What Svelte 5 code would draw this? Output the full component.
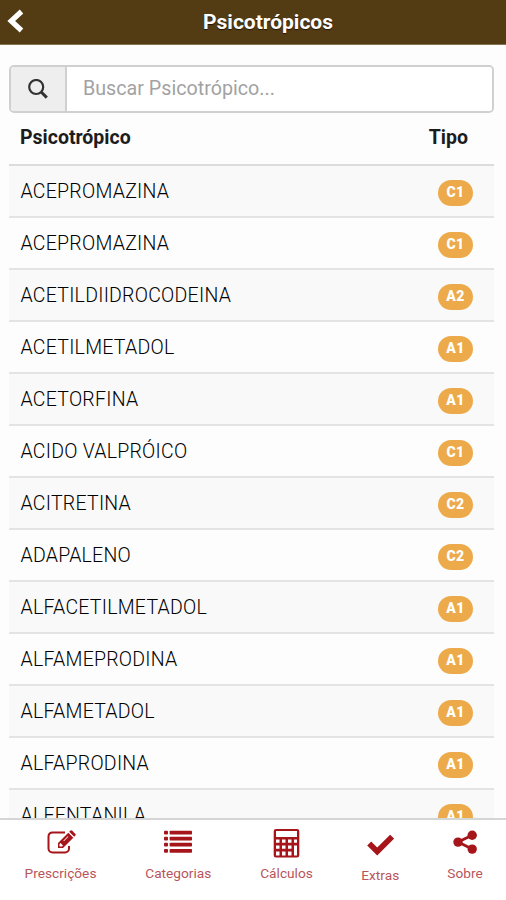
<script>
  const items = [
    { name: "ACEPROMAZINA", type: "C1" },
    { name: "ACEPROMAZINA", type: "C1" },
    { name: "ACETILDIIDROCODEINA", type: "A2" },
    { name: "ACETILMETADOL", type: "A1" },
    { name: "ACETORFINA", type: "A1" },
    { name: "ACIDO VALPRÓICO", type: "C1" },
    { name: "ACITRETINA", type: "C2" },
    { name: "ADAPALENO", type: "C2" },
    { name: "ALFACETILMETADOL", type: "A1" },
    { name: "ALFAMEPRODINA", type: "A1" },
    { name: "ALFAMETADOL", type: "A1" },
    { name: "ALFAPRODINA", type: "A1" },
    { name: "ALFENTANILA", type: "A1" },
  ];

  let search = $state("");
  let filtered = $derived(
    items.filter((i) => i.name.toLowerCase().includes(search.toLowerCase()))
  );
</script>

<div class="page">
  <header>
    <button class="back" aria-label="Voltar">
      <svg width="18" height="26" viewBox="0 0 18 26">
        <path d="M14.500 3.500 4.200 13l10.300 9.500" fill="none" stroke="#fff" stroke-width="5.200" />
      </svg>
    </button>
    <h1>Psicotrópicos</h1>
  </header>

  <main>
    <div class="search">
      <span class="addon">
        <svg width="20" height="20" viewBox="0 0 20 20" fill="none" stroke="#333">
          <circle cx="8.200" cy="8" r="7" stroke-width="2.200" />
          <path d="m13.200 13 5.600 5.600" stroke-width="3" />
        </svg>
      </span>
      <input type="text" placeholder="Buscar Psicotrópico..." bind:value={search} />
    </div>

    <div class="table">
      <div class="row head">
        <span>Psicotrópico</span>
        <span>Tipo</span>
      </div>
      {#each filtered as item}
        <div class="row item">
          <span>{item.name}</span>
          <span class="badge">{item.type}</span>
        </div>
      {/each}
    </div>
  </main>

  <nav>
    <a href="#prescricoes" class="w1">
      <svg width="30" height="26" viewBox="0 0 30 26">
        <path d="M19 3.400H6.500A4 4 0 0 0 2.500 7.400v12a4 4 0 0 0 4 4h12.500a4 4 0 0 0 4-4V17" fill="none" stroke="currentColor" stroke-width="2" />
        <path fill-rule="evenodd" d="M12 19v-5L22.300 3.700l5 5L17 19zM13.500 15v2.500H16l1-1-2.500-2.500zM17.300 11.700l.6.600 4.500-4.500-.6-.6z" />
        <path d="m23.200 2.800 1-1a1.500 1.500 0 0 1 2.100 0l2.900 2.900a1.500 1.500 0 0 1 0 2.100l-1 1z" />
      </svg>
      <span>Prescrições</span>
    </a>
    <a href="#categorias" class="w2">
      <svg width="28" height="26" viewBox="0 0 28 26">
        {#each [1.700, 7.700, 13.700, 19.900] as y}
          <rect x="0" {y} width="4" height="3.800" rx="1" />
          <rect x="5.600" {y} width="22.400" height="3.800" rx=".8" />
        {/each}
      </svg>
      <span>Categorias</span>
    </a>
    <a href="#calculos" class="w3">
      <svg width="28" height="30" viewBox="0 0 28 30">
        <path fill-rule="evenodd" d="M3 0h21a2.300 2.300 0 0 1 2.300 2.300v24a2.300 2.300 0 0 1-2.300 2.300H3a2.300 2.300 0 0 1-2.300-2.300v-24A2.300 2.300 0 0 1 3 0zM3 2v6h21V2zM3 10.500v3.300h3.500v-3.300zM9 10.500v3.300h3.500v-3.300zM15 10.500v3.300h3.500v-3.300zM21 10.500v3.300h3v-3.300zM3 16.500v3.300h3.500v-3.300zM9 16.500v3.300h3.500v-3.300zM15 16.500v3.300h3.500v-3.300zM3 22.500v4h3.500v-4zM9 22.500v4h3.500v-4zM15 22.500v4h3.500v-4zM21 16.500v10h3v-10z" />
      </svg>
      <span>Cálculos</span>
    </a>
    <a href="#extras" class="w4">
      <svg width="28" height="30" viewBox="0 0 28 30">
        <path d="m3.200 14.600 8 8L26.100 7.700" fill="none" stroke="currentColor" stroke-width="5.600" />
      </svg>
      <span>Extras</span>
    </a>
    <a href="#sobre" class="w5">
      <svg width="26" height="26" viewBox="0 0 26 26">
        <path d="M20.200 6.200 6 13.100l14.200 7" fill="none" stroke="currentColor" stroke-width="2.800" />
        <circle cx="20.200" cy="6.200" r="4.700" />
        <circle cx="6" cy="13.100" r="4.700" />
        <circle cx="20.200" cy="20.100" r="4.700" />
      </svg>
      <span>Sobre</span>
    </a>
  </nav>
</div>

<style>
  :global(body) {
    background: #fdfdfd;
  }

  .page {
    display: flex;
    flex-direction: column;
    height: 900px;
    overflow: hidden;
    font-family: Roboto, "Liberation Sans", sans-serif;
    color: #1c1c1c;
  }

  header {
    display: grid;
    grid-template-columns: 40px 1fr 10px;
    align-items: center;
    height: 45px;
    flex-shrink: 0;
    background: #533c14;
    border-bottom: 1px solid #857350;
    box-sizing: border-box;
  }

  h1 {
    margin: 0;
    padding-bottom: 1px;
    text-align: center;
    font-size: 21px;
    font-weight: 700;
    line-height: 24px;
    color: #fff;
    text-shadow: 0 1px 1px #221500;
  }

  .back {
    display: flex;
    padding: 0 0 3px 7px;
    border: 0;
    background: none;
  }

  main {
    flex: 1;
    min-height: 0;
    overflow: hidden;
    padding: 20px 12px 0 9px;
  }

  .search {
    display: flex;
    height: 48px;
    box-sizing: border-box;
    border: 2px solid #d0d0d0;
    border-radius: 5px;
    background: #fff;
    overflow: hidden;
  }

  .addon {
    display: flex;
    align-items: center;
    justify-content: center;
    width: 54px;
    padding-bottom: 1px;
    border-right: 2px solid #d0d0d0;
    background: #eee;
  }

  input {
    flex: 1;
    min-width: 0;
    border: 0;
    outline: 0;
    padding: 0 16px 2px;
    background: #fff;
    font: 400 19.7px Roboto, "Liberation Sans", sans-serif;
    color: #555;
  }

  input::placeholder {
    color: #a2a2a2;
    opacity: 1;
  }

  .row {
    display: flex;
    justify-content: space-between;
    box-sizing: border-box;
    padding-left: 11px;
  }

  .head {
    height: 53px;
    padding-top: 12px;
    padding-right: 26px;
    border-bottom: 2px solid #dcdcdc;
    font-size: 19.5px;
    font-weight: 700;
    line-height: 25px;
  }

  .item {
    height: 52.03px;
    padding-top: 12px;
    padding-right: 21px;
    padding-left: 11.5px;
    border-bottom: 2px solid #e4e4e4;
    font-size: 19.5px;
    font-weight: 300;
    line-height: 27px;
    letter-spacing: 0.25px;
    color: #000;
  }

  .item:nth-child(even) {
    background: #f9f9f9;
  }

  .badge {
    width: 35px;
    height: 26px;
    margin-top: 2px;
    border-radius: 13px;
    background: #edaa4b;
    color: #fff;
    font-size: 14px;
    font-weight: 900;
    line-height: 25px;
    letter-spacing: 0.4px;
    text-align: center;
  }

  nav {
    display: flex;
    justify-content: space-between;
    height: 82px;
    flex-shrink: 0;
    box-sizing: border-box;
    padding: 9px 23px 0 24px;
    border-top: 2px solid #d5d5d5;
    background: #fff;
  }

  nav a {
    display: flex;
    flex-direction: column;
    align-items: center;
    color: #a5151a;
    font-size: 13.7px;
    line-height: 18px;
    text-decoration: none;
    white-space: nowrap;
  }

  nav svg {
    fill: currentColor;
  }

  nav span {
    margin-top: auto;
    padding-bottom: 18px;
    color: #b8555b;
  }

  .w1 { width: 73px; }
  .w2 { width: 67px; }
  .w3 { width: 54px; }
  .w4 { width: 38px; }
  .w4 span { padding-bottom: 16px; }
  .w5 { width: 36px; }
</style>
